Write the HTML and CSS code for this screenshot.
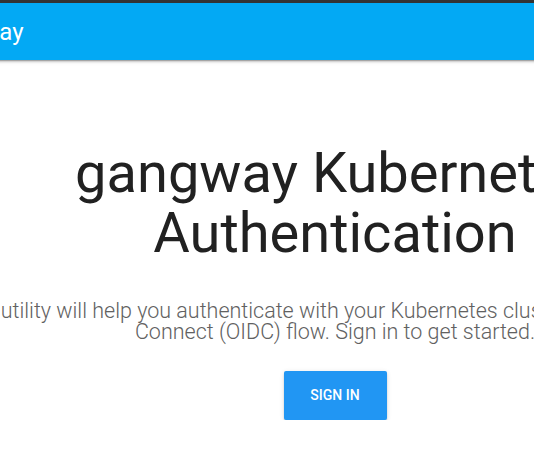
FILE: index.html
```html
<!DOCTYPE html>
<html lang="en">
<head>
  <meta charset="UTF-8" />
  <meta name="viewport" content="width=device-width, initial-scale=1.0"/>
  <title>gangway</title>
  <link rel="stylesheet" href="styles.css">
</head>
<body>

<div class="layout">
  <header class="header">
    <span class="title">gangway</span>
  </header>

  <main class="content">
    <h2>gangway Kubernetes Authentication</h2>
    <p>This utility will help you authenticate with your Kubernetes cluster with an OpenID Connect (OIDC) flow. Sign in to get started.</p>
    <a class="button" href="#">Sign In</a>
  </main>
</div>

</body>
</html>
```

FILE: styles.css
```css
body {
  font-family: 'Roboto', 'Helvetica', 'Arial', sans-serif;
  margin: 0;
  padding: 0;
  background: #fff;
  overflow: hidden;
  border-top: 3px solid #333;
}
.layout {
  width: 870px;
  margin-left: -100px;
}
.header {
  height: 57px;
  background-color: #03a9f4;
  color: #fff;
  display: flex;
  align-items: center;
  padding-left: 28px;
  box-shadow: 0 2px 2px 0 rgba(0,0,0,.14), 0 3px 1px -2px rgba(0,0,0,.2), 0 1px 5px 0 rgba(0,0,0,.12);
}
.title {
  font-size: 24px;
  line-height: 1;
}
.content {
  padding: 83px 40px 0;
  text-align: center;
}
h2 {
  font-size: 56px;
  font-weight: 400;
  line-height: 60px;
  color: #212121;
  margin: 0;
}
p {
  font-size: 21.5px;
  font-weight: 300;
  line-height: 21px;
  color: #616161;
  margin: 37px 0 29px;
}
.button {
  display: inline-block;
  width: 103px;
  height: 49px;
  line-height: 49px;
  background-color: #2196f3;
  color: #fff;
  font-size: 14px;
  font-weight: 500;
  text-transform: uppercase;
  text-decoration: none;
  border-radius: 2px;
  box-shadow: 0 2px 2px 0 rgba(0,0,0,.14), 0 3px 1px -2px rgba(0,0,0,.2), 0 1px 5px 0 rgba(0,0,0,.12);
}
```
